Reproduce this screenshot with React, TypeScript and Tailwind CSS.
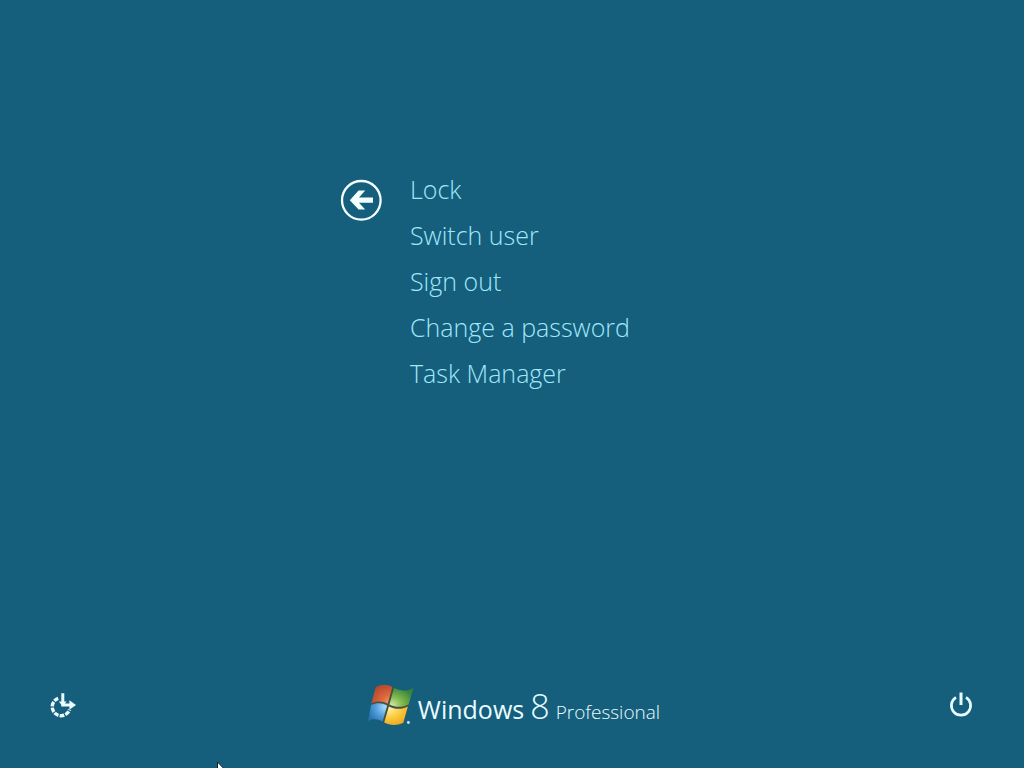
const actions = ["Lock", "Switch user", "Sign out", "Change a password", "Task Manager"];

function BackIcon() {
  return (
    <svg viewBox="0 0 42 42" className="size-[42px]" fill="none" aria-hidden="true">
      <circle cx="21.3" cy="21.3" r="19.3" stroke="#f4ffff" strokeWidth="2.3" />
      <path d="M9.8 21.2 18.6 11.6H25.2L19 18.6H33V23.8H19L25.2 30.6H18.6Z" fill="#f4ffff" />
    </svg>
  );
}

function EaseOfAccessIcon() {
  return (
    <svg viewBox="0 0 28 28" className="size-7" fill="none" stroke="#eafcff" aria-hidden="true">
      <path d="M9.2 7.4A8.9 8.9 0 1 0 20.6 18.6" strokeWidth="3.4" strokeDasharray="4.6 1.2" />
      <path d="M13.8 2.2V14H22" strokeWidth="3" />
      <path d="M9.8 10.6 13.8 15.5 17.6 10.6ZM20.4 9.2 27 14 20.4 18.8Z" fill="#eafcff" stroke="none" />
    </svg>
  );
}

function PowerIcon() {
  return (
    <svg viewBox="0 0 28 28" className="size-7" fill="none" stroke="#e6fbff" aria-hidden="true">
      <path d="M9 6.4A9.6 9.6 0 1 0 19 6.4" strokeWidth="2.7" />
      <path d="M14 1.5V14" strokeWidth="3" />
    </svg>
  );
}

function WindowsFlag() {
  return (
    <svg viewBox="0 0 46 46" className="size-[46px] shrink-0" aria-hidden="true">
      <defs>
        <radialGradient id="red" cx="0.9" cy="0.95" r="1">
          <stop offset="0" stopColor="#f0a080" />
          <stop offset="0.4" stopColor="#e06a3a" />
          <stop offset="1" stopColor="#b54a32" />
        </radialGradient>
        <radialGradient id="green" cx="0.1" cy="0.9" r="1">
          <stop offset="0" stopColor="#d0e6a0" />
          <stop offset="0.45" stopColor="#80b84b" />
          <stop offset="1" stopColor="#37843c" />
        </radialGradient>
        <radialGradient id="blue" cx="0.9" cy="0.2" r="1">
          <stop offset="0" stopColor="#a8dcf8" />
          <stop offset="0.5" stopColor="#549fdf" />
          <stop offset="1" stopColor="#2570a8" />
        </radialGradient>
        <radialGradient id="yellow" cx="0.2" cy="0.1" r="1.1">
          <stop offset="0" stopColor="#fff0a0" />
          <stop offset="0.5" stopColor="#fbc837" />
          <stop offset="1" stopColor="#eb9c20" />
        </radialGradient>
      </defs>
      <path d="M25.2 5.5 15.3 40M3.3 22.3C9 19.8 14.5 20 20.3 23 26 26 34 26.2 40.2 23.5" fill="none" stroke="#4a4f3c" strokeWidth="2.2" />
      <path d="M7.6 5.5C12.6 2 18.8 2 24.4 5L19.7 21.8C14.5 18.9 9 18.9 3.4 21.4Z" fill="url(#red)" />
      <path d="M26 6C32 9.2 38.5 9.4 45.4 6.2L40.6 22.6C34 25.8 27.2 25.5 21.4 22.4Z" fill="url(#green)" />
      <path d="M3 23C8.5 20.6 14 20.6 19.2 23.4L14.5 39.8C9.5 36.8 4.5 36.6 0 39Z" fill="url(#blue)" />
      <path d="M20.9 24.4C27 27.5 33.5 27.7 39.9 24.5L35.2 41C28.5 43.8 22 43.6 16.2 40.6Z" fill="url(#yellow)" />
      <circle cx="40.4" cy="40.5" r="1.4" fill="#d9edf5" />
    </svg>
  );
}

export default function App() {
  return (
    <div className="relative flex min-h-screen flex-col overflow-hidden bg-[#155f7c] font-['Open_Sans','Noto_Sans',sans-serif]">
      <main className="flex flex-1 items-start gap-7 pt-[166px] pl-[33.2%]">
        <button type="button" aria-label="Back" className="mt-[13px] shrink-0 rounded-full">
          <BackIcon />
        </button>
        <ul>
          {actions.map((action) => (
            <li key={action}>
              <button
                type="button"
                className="block h-[46px] text-left text-[25px] leading-[46px] font-light whitespace-nowrap text-[#a0e8fb]"
              >
                {action}
              </button>
            </li>
          ))}
        </ul>
      </main>

      <footer className="flex items-center justify-between px-[49px] pb-[33px]">
        <button type="button" aria-label="Ease of access">
          <EaseOfAccessIcon />
        </button>
        <div className="flex items-center gap-1 pl-1 text-[#eafcff]">
          <WindowsFlag />
          <p className="flex items-baseline gap-1.5 pt-2 leading-[46px] whitespace-nowrap">
            <span className="text-[25px]">Windows</span>
            <span className="text-[34px] font-light">8</span>
            <span className="text-[19px] font-light">Professional</span>
          </p>
        </div>
        <button type="button" aria-label="Power">
          <PowerIcon />
        </button>
      </footer>

      <svg viewBox="0 0 12 19" className="absolute -bottom-3 left-[217px] h-[19px] w-3" aria-hidden="true">
        <path d="M0.5 1V16L4 12.7 6.5 18 8.8 17 6.3 11.8H11Z" fill="#ffffff" stroke="#06202c" />
      </svg>
    </div>
  );
}
